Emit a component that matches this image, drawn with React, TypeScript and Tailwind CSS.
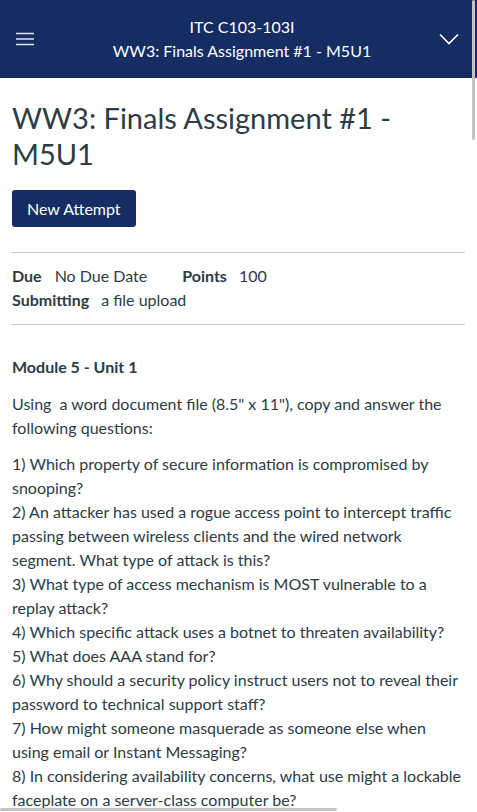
const questions = [
  '1) Which property of secure information is compromised by snooping?',
  '2) An attacker has used a rogue access point to intercept traffic passing between wireless clients and the wired network segment. What type of attack is this?',
  '3) What type of access mechanism is MOST vulnerable to a replay attack?',
  '4) Which specific attack uses a botnet to threaten availability?',
  '5) What does AAA stand for?',
  '6) Why should a security policy instruct users not to reveal their password to technical support staff?',
  '7) How might someone masquerade as someone else when using email or Instant Messaging?',
  '8) In considering availability concerns, what use might a lockable faceplate on a server-class computer be?',
];

function App() {
  return (
    <div
      className="relative h-screen overflow-hidden bg-white text-[#2d3b45]"
      style={{ fontFamily: 'Lato, "Open Sans", sans-serif' }}
    >
      {/* top bar */}
      <header className="flex h-[78px] items-center bg-[#162d63] text-white">
        <button className="flex w-[48px] justify-center pl-[1px]">
          <svg width="18" height="14" viewBox="0 0 18 14" fill="none">
            <path d="M0 1.5h18M0 7h18M0 12.5h18" stroke="#dfe3ea" strokeWidth="1.6" />
          </svg>
        </button>
        <div className="flex-1 pl-[7px] text-center text-[16px] leading-[24px]">
          <div>ITC C103-103I</div>
          <div>WW3: Finals Assignment #1 - M5U1</div>
        </div>
        <button className="flex w-[48px] justify-center pr-[8px]">
          <svg width="20" height="12" viewBox="0 0 20 12" fill="none">
            <path d="M1 1.5l9 9 9-9" stroke="white" strokeWidth="1.6" />
          </svg>
        </button>
      </header>

      <main className="px-[12px] pt-[22px]">
        <h1 className="text-[29px] leading-[36px] font-normal">WW3: Finals Assignment #1 - M5U1</h1>

        <button className="mt-[18px] h-[37px] rounded-[3px] bg-[#162d63] px-[15px] text-[16px] text-white">
          New Attempt
        </button>

        <div className="mt-[25px] border-t border-b border-[#c7cdd1] pt-[11px] pb-[12px] text-[16px] leading-[24px]">
          <div className="flex">
            <span className="font-bold">Due</span>
            <span className="ml-[13px]">No Due Date</span>
            <span className="ml-[35px] font-bold">Points</span>
            <span className="ml-[12px]">100</span>
          </div>
          <div className="flex">
            <span className="font-bold">Submitting</span>
            <span className="ml-[12px]">a file upload</span>
          </div>
        </div>

        <div className="mt-[30px] text-[16px] leading-[24px]">
          <p className="font-bold">Module 5 - Unit 1</p>
          <p className="mt-[13px]">Using&nbsp; a word document file (8.5" x 11"), copy and answer the following questions:</p>
          <div className="mt-[12px]">
            {questions.map((q) => (
              <p key={q}>{q}</p>
            ))}
          </div>
        </div>
      </main>

      {/* overlay scroll indicators */}
      <div className="absolute right-[2px] top-0 h-[140px] w-[3px] rounded-full bg-[#c4c4c4]" />
      <div className="absolute bottom-[1px] left-0 h-[3px] w-[337px] rounded-full bg-[#c4c4c4]" />
    </div>
  );
}

export default App;
